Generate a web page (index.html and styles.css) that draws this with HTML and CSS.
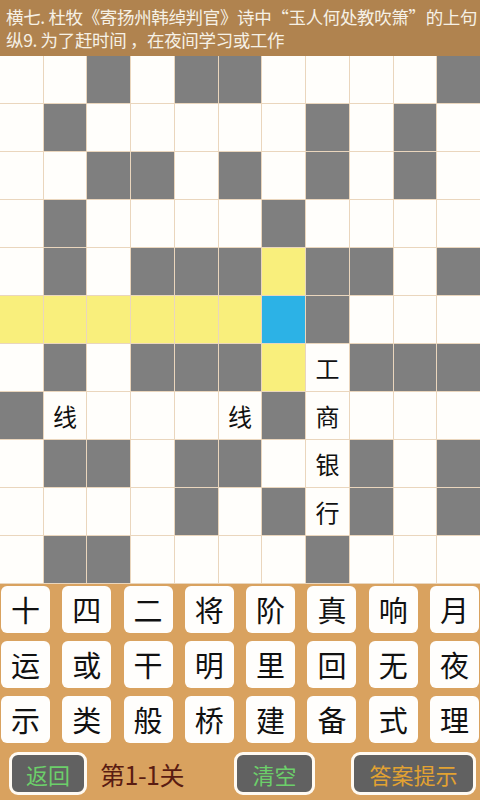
FILE: index.html
```html
<!DOCTYPE html>
<html lang="zh">
<head>
<meta charset="utf-8">
<title>填字游戏</title>
<link rel="stylesheet" href="styles.css">
</head>
<body>
<div class="app">
  <header class="clues">
    <p class="clue">横七. 杜牧《寄扬州韩绰判官》诗中“玉人何处教吹箫”的上句</p>
    <p class="clue">纵9. 为了赶时间 ，在夜间学习或工作</p>
  </header>

  <main class="board">
    <div class="cell w"></div><div class="cell w"></div><div class="cell b"></div><div class="cell w"></div><div class="cell b"></div><div class="cell b"></div><div class="cell w"></div><div class="cell w"></div><div class="cell w"></div><div class="cell w"></div><div class="cell b"></div>
    <div class="cell w"></div><div class="cell b"></div><div class="cell w"></div><div class="cell w"></div><div class="cell w"></div><div class="cell w"></div><div class="cell w"></div><div class="cell b"></div><div class="cell w"></div><div class="cell b"></div><div class="cell w"></div>
    <div class="cell w"></div><div class="cell w"></div><div class="cell b"></div><div class="cell b"></div><div class="cell w"></div><div class="cell b"></div><div class="cell w"></div><div class="cell b"></div><div class="cell w"></div><div class="cell b"></div><div class="cell w"></div>
    <div class="cell w"></div><div class="cell b"></div><div class="cell w"></div><div class="cell w"></div><div class="cell w"></div><div class="cell w"></div><div class="cell b"></div><div class="cell w"></div><div class="cell w"></div><div class="cell w"></div><div class="cell w"></div>
    <div class="cell w"></div><div class="cell b"></div><div class="cell w"></div><div class="cell b"></div><div class="cell b"></div><div class="cell b"></div><div class="cell y"></div><div class="cell b"></div><div class="cell b"></div><div class="cell w"></div><div class="cell b"></div>
    <div class="cell y"></div><div class="cell y"></div><div class="cell y"></div><div class="cell y"></div><div class="cell y"></div><div class="cell y"></div><div class="cell c"></div><div class="cell b"></div><div class="cell w"></div><div class="cell w"></div><div class="cell w"></div>
    <div class="cell w"></div><div class="cell b"></div><div class="cell w"></div><div class="cell b"></div><div class="cell b"></div><div class="cell b"></div><div class="cell y"></div><div class="cell w">工</div><div class="cell b"></div><div class="cell b"></div><div class="cell b"></div>
    <div class="cell b"></div><div class="cell w">线</div><div class="cell w"></div><div class="cell w"></div><div class="cell w"></div><div class="cell w">线</div><div class="cell b"></div><div class="cell w">商</div><div class="cell w"></div><div class="cell w"></div><div class="cell w"></div>
    <div class="cell w"></div><div class="cell b"></div><div class="cell b"></div><div class="cell w"></div><div class="cell b"></div><div class="cell b"></div><div class="cell w"></div><div class="cell w">银</div><div class="cell b"></div><div class="cell w"></div><div class="cell b"></div>
    <div class="cell w"></div><div class="cell w"></div><div class="cell w"></div><div class="cell w"></div><div class="cell b"></div><div class="cell w"></div><div class="cell b"></div><div class="cell w">行</div><div class="cell b"></div><div class="cell w"></div><div class="cell b"></div>
    <div class="cell w"></div><div class="cell b"></div><div class="cell b"></div><div class="cell w"></div><div class="cell w"></div><div class="cell w"></div><div class="cell w"></div><div class="cell b"></div><div class="cell w"></div><div class="cell w"></div><div class="cell w"></div>
  </main>

  <section class="pool">
    <div class="tiles">
      <button class="tile">十</button><button class="tile">四</button><button class="tile">二</button><button class="tile">将</button><button class="tile">阶</button><button class="tile">真</button><button class="tile">响</button><button class="tile">月</button>
    </div>
    <div class="tiles">
      <button class="tile">运</button><button class="tile">或</button><button class="tile">干</button><button class="tile">明</button><button class="tile">里</button><button class="tile">回</button><button class="tile">无</button><button class="tile">夜</button>
    </div>
    <div class="tiles">
      <button class="tile">示</button><button class="tile">类</button><button class="tile">般</button><button class="tile">桥</button><button class="tile">建</button><button class="tile">备</button><button class="tile">式</button><button class="tile">理</button>
    </div>
  </section>

  <footer class="bar">
    <button class="btn btn-back">返回</button>
    <span class="level">第1-1关</span>
    <button class="btn btn-clear">清空</button>
    <button class="btn btn-hint">答案提示</button>
  </footer>
</div>
</body>
</html>
```

FILE: styles.css
```css
* { box-sizing: border-box; }
html, body { margin: 0; padding: 0; }
body {
  width: 480px;
  height: 800px;
  overflow: hidden;
  font-family: "Noto Sans CJK SC", "Noto Sans", sans-serif;
  background: #d8a15e;
}
.app {
  width: 480px;
  height: 800px;
  display: flex;
  flex-direction: column;
}
.clues {
  height: 56px;
  background: #b0834f;
  padding: 5px 0 0 6px;
}
.clue {
  margin: 0;
  color: #f6f1e6;
  font-size: 17.5px;
  line-height: 23px;
  white-space: nowrap;
  letter-spacing: -0.35px;
}
.board {
  display: grid;
  grid-template-columns: repeat(11, 1fr);
  grid-template-rows: repeat(11, 47px);
  gap: 1px;
  background: #ead6bd;
  height: 528px;
  border-bottom: 1px solid #ead6bd;
}
.cell {
  display: flex;
  align-items: center;
  justify-content: center;
  font-size: 24px;
  color: #111;
}
.w { background: #fffefb; }
.b { background: #7f7f7f; }
.y { background: #f9ef7c; }
.c { background: #2cb2e6; }
.pool {
  background: #d9a25f;
  padding: 2px 1px 0 1px;
  display: flex;
  flex-direction: column;
  gap: 8px;
}
.tiles {
  display: flex;
  justify-content: space-between;
}
.tile {
  width: 49px;
  height: 47px;
  border: none;
  border-radius: 6px;
  background: #fffefc;
  color: #111;
  font-family: "Noto Sans CJK SC", sans-serif;
  font-size: 29px;
  padding: 0;
  display: flex;
  align-items: center;
  justify-content: center;
  line-height: 1;
}
.bar {
  flex: 1;
  background: #d9a25f;
  display: flex;
  align-items: flex-start;
  padding: 9px 0 0 9px;
}
.btn {
  height: 43px;
  border: 3px solid #fffaf2;
  border-radius: 9px;
  background: #616161;
  font-family: "Noto Sans CJK SC", sans-serif;
  font-size: 22px;
  padding: 0;
  display: flex;
  align-items: center;
  justify-content: center;
  line-height: 1;
}
.btn-back { width: 78px; color: #6ccf6a; }
.level {
  margin-left: 13px;
  width: 134px;
  height: 43px;
  display: flex;
  align-items: center;
  font-size: 25px;
  letter-spacing: -0.5px;
  color: #5a1c12;
}
.btn-clear { width: 81px; color: #6ccf6a; }
.btn-hint { width: 125px; margin-left: 36px; color: #e2a232; }
```
